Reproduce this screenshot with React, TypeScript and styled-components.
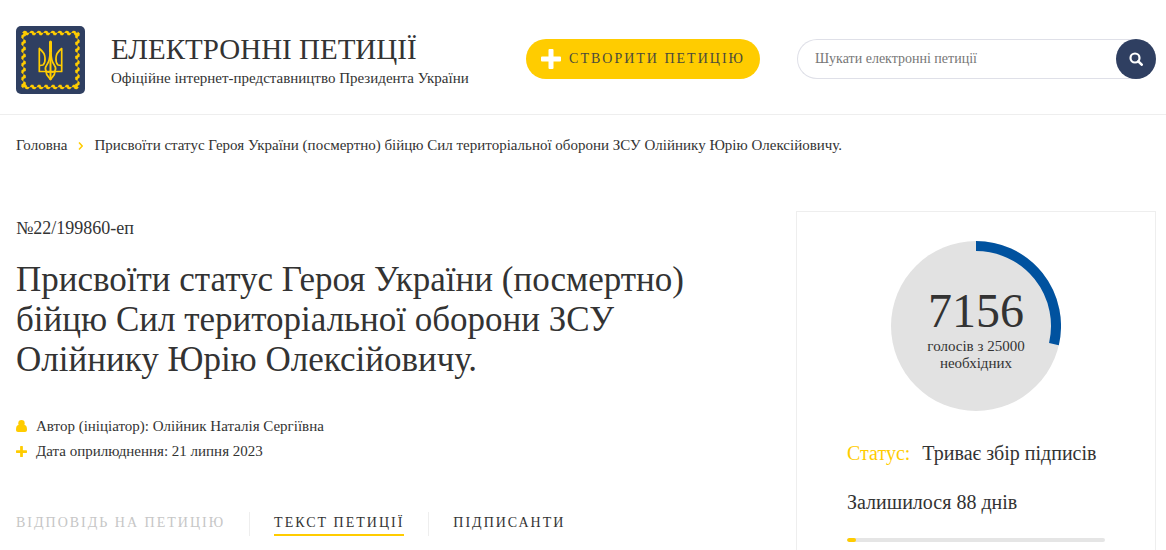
import React from "react";
import styled, { createGlobalStyle } from "styled-components";

const colors = {
  ink: "#333333",
  yellow: "#ffcc00",
  navy: "#2f3f61",
  blue: "#00529f",
  line: "#eeeeee",
  disc: "#e2e2e2",
};

const GlobalStyle = createGlobalStyle`
  *, *::before, *::after { box-sizing: border-box; }
  body {
    margin: 0;
    background: #ffffff;
    color: ${colors.ink};
    font-family: Georgia, "Liberation Serif", serif;
    font-size: 15px;
    line-height: 20px;
  }
  button, input { font: inherit; color: inherit; }
  a { color: inherit; text-decoration: none; }
  h1, h2, p, ol, ul { margin: 0; padding: 0; font-weight: 400; list-style: none; }
`;

const Page = styled.div`
  display: flex;
  flex-direction: column;
  min-height: 100vh;
`;

const Header = styled.header`
  display: flex;
  align-items: center;
  gap: 37px;
  padding: 26px 10px 20px 16px;
  border-bottom: 1px solid ${colors.line};
`;

const Brand = styled.a`
  display: flex;
  align-items: center;
  gap: 26px;
  flex: 1;
  min-width: 0;
`;

const EmblemSvg = styled.svg`
  width: 69px;
  height: 68px;
  flex: none;
`;

const BrandText = styled.span`
  padding-top: 2px;
`;

const BrandTitle = styled.span`
  display: block;
  font-size: 29px;
  line-height: 34px;
  white-space: nowrap;
`;

const BrandSubtitle = styled.span`
  display: block;
  line-height: 24px;
  white-space: nowrap;
`;

const CreateButton = styled.button`
  display: flex;
  align-items: center;
  justify-content: center;
  gap: 8px;
  width: 234px;
  height: 40px;
  margin-top: -2px;
  padding: 0;
  border: 0;
  border-radius: 20px;
  background: ${colors.yellow};
  color: #4b4a3c;
  font-size: 14px;
  letter-spacing: 2px;
  text-transform: uppercase;
  white-space: nowrap;
`;

const SearchForm = styled.form`
  display: flex;
  width: 359px;
  height: 40px;
  margin-top: -2px;
  border: 1px solid #dfe0e8;
  border-right: 0;
  border-radius: 20px;
`;

const SearchInput = styled.input`
  flex: 1;
  min-width: 0;
  padding: 0 17px;
  border: 0;
  background: transparent;
  outline: none;
  font-size: 14px;
  &::placeholder { color: #777777; opacity: 1; }
`;

const SearchButton = styled.button`
  display: flex;
  align-items: center;
  justify-content: center;
  width: 40px;
  height: 40px;
  margin: -1px 0;
  padding: 0;
  border: 0;
  border-radius: 50%;
  background: ${colors.navy};
`;

const Breadcrumbs = styled.ol`
  display: flex;
  align-items: center;
  gap: 11px;
  padding: 20px 10px 0 16px;
`;

const Main = styled.main`
  display: flex;
  flex: 1;
  gap: 37px;
  padding: 56px 10px 0 16px;
`;

const Petition = styled.article`
  flex: 1;
  min-width: 0;
`;

const PetitionNumber = styled.p`
  margin-top: 7px;
  font-size: 18px;
`;

const PetitionTitle = styled.h1`
  max-width: 700px;
  margin-top: 22px;
  font-size: 35px;
  line-height: 40px;
`;

const MetaList = styled.ul`
  display: flex;
  flex-direction: column;
  gap: 5px;
  margin-top: 36px;
`;

const MetaItem = styled.li`
  display: flex;
  align-items: center;
  gap: 9px;
`;

const Tabs = styled.nav`
  display: flex;
  margin-top: 51px;
`;

const TabCell = styled.div`
  display: flex;
  height: 24px;
  & + & {
    margin-left: 24px;
    padding-left: 24px;
    border-left: 1px solid ${colors.line};
  }
`;

const Tab = styled.button<{ $active?: boolean }>`
  padding: 0;
  border: 0;
  border-bottom: 2px solid ${(p) => (p.$active ? colors.yellow : "transparent")};
  background: transparent;
  font-size: 14px;
  letter-spacing: 2px;
  text-transform: uppercase;
  white-space: nowrap;
  &:disabled { color: #c6c6c6; }
`;

const VoteCard = styled.aside`
  width: 360px;
  flex: none;
  padding: 29px 50px 8px;
  border: 1px solid ${colors.line};
  border-bottom: 0;
`;

const VoteDial = styled.div`
  display: grid;
  place-items: center;
  width: 170px;
  height: 170px;
  margin: 0 auto;
  > * { grid-area: 1 / 1; }
`;

const VoteText = styled.div`
  padding-top: 4px;
  text-align: center;
  line-height: 17px;
`;

const VoteCount = styled.strong`
  display: block;
  font-size: 48px;
  font-weight: 400;
  line-height: 54px;
`;

const Status = styled.p<{ $gap: number }>`
  display: flex;
  gap: 12px;
  margin-top: ${(p) => p.$gap}px;
  font-size: 20px;
  line-height: 24px;
  white-space: nowrap;
`;

const StatusLabel = styled.span`
  color: ${colors.yellow};
`;

const TimeBar = styled.div`
  height: 4px;
  margin-top: 24px;
  border-radius: 2px;
  background: #e5e5e5;
  overflow: hidden;
`;

const TimeFill = styled.div`
  height: 100%;
  border-radius: 2px;
  background: ${colors.yellow};
`;

const twists = Array.from({ length: 8 }, (_, i) => i * 7);

function RopeSide() {
  return (
    <>
      {twists.map((x) => (
        <path key={x} d={`M${x} 2.200L${x + 2} .2L${x + 4.400} .6L${x + 5} 2L${x + 7.400} 2.600L${x + 6} 4.800L${x + 3.600} 4.800L${x + 2.800} 2.800Z`} />
      ))}
    </>
  );
}

function Emblem() {
  return (
    <EmblemSvg viewBox="0 0 69 68" aria-hidden="true">
      <rect width="69" height="68" rx="5" fill={colors.navy} />
      <g fill={colors.yellow}>
        {[0, 90, 180, 270].map((turn) => (
          <g key={turn} transform={`rotate(${turn} 34.500 34) translate(6 4.500)`}>
            <RopeSide />
          </g>
        ))}
      </g>
      <g fill="none" stroke={colors.yellow} strokeWidth="1.700" strokeLinejoin="round">
        <path d="M29 32C29 28 26.500 25 23.300 22.500V45.500H45.700V22.500C42.500 25 40 28 40 32" />
        <path d="M29 32C29.300 35 29 37 27 39L24 39.500M40 32C39.700 35 40 37 42 39L45 39.500" />
        <path d="M34.500 19V54" strokeWidth="2" />
        <path d="M34.500 16V26" strokeWidth="3" strokeLinecap="round" />
        <path d="M34 27C34 33 33 36 30.500 39.500C28 43 30 47.500 34.500 45.500M35 27C35 33 36 36 38.500 39.500C41 43 39 47.500 34.500 45.500" />
        <path d="M30 45.500C30 49.500 32.500 50.500 34.500 53.500C36.500 50.500 39 49.500 39 45.500" />
      </g>
    </EmblemSvg>
  );
}

function PlusIcon({ size }: { size: number }) {
  return (
    <svg width={size} height={size} viewBox="0 0 20 20" fill="currentColor" aria-hidden="true">
      <path d="M8.500 0h3a1 1 0 0 1 1 1v6.500H19a1 1 0 0 1 1 1v3a1 1 0 0 1-1 1h-6.500V19a1 1 0 0 1-1 1h-3a1 1 0 0 1-1-1v-6.500H1a1 1 0 0 1-1-1v-3a1 1 0 0 1 1-1h6.500V1a1 1 0 0 1 1-1z" />
    </svg>
  );
}

const MetaIcon = styled.span`
  display: flex;
  color: ${colors.yellow};
`;

const CreateIcon = styled.span`
  display: flex;
  color: #ffffff;
`;

function UserIcon() {
  return (
    <svg width="11" height="12" viewBox="0 0 11 12" fill="currentColor" aria-hidden="true">
      <circle cx="5.500" cy="3.200" r="3.200" />
      <path d="M2.400 5C.6 5.400 0 7.300 0 9.700C0 11 .8 12 2 12H9C10.200 12 11 11 11 9.700C11 7.300 10.400 5.400 8.600 5Z" />
    </svg>
  );
}

function SearchIcon() {
  return (
    <svg width="14" height="14" viewBox="0 0 14 14" fill="none" stroke="#ffffff" aria-hidden="true">
      <circle cx="6" cy="6" r="4.500" strokeWidth="2.200" />
      <path d="M9.300 9.300L12.700 12.700" strokeWidth="2.600" strokeLinecap="round" />
    </svg>
  );
}

function Dial({ votes, goal }: { votes: number; goal: number }) {
  const angle = (votes / goal) * 2 * Math.PI;
  const x = 85 + 80 * Math.sin(angle);
  const y = 85 - 80 * Math.cos(angle);
  return (
    <svg width="170" height="170" viewBox="0 0 170 170" aria-hidden="true">
      <circle cx="85" cy="85" r="85" fill={colors.disc} />
      <path d={`M85 5A80 80 0 0 1 ${x} ${y}`} fill="none" stroke={colors.blue} strokeWidth="10" />
    </svg>
  );
}

export default function App() {
  const title =
    "Присвоїти статус Героя України (посмертно) бійцю Сил територіальної оборони ЗСУ Олійнику Юрію Олексійовичу.";
  return (
    <Page>
      <GlobalStyle />
      <Header>
        <Brand href="#">
          <Emblem />
          <BrandText>
            <BrandTitle>ЕЛЕКТРОННІ ПЕТИЦІЇ</BrandTitle>
            <BrandSubtitle>Офіційне інтернет-представництво Президента України</BrandSubtitle>
          </BrandText>
        </Brand>
        <CreateButton type="button">
          <CreateIcon><PlusIcon size={20} /></CreateIcon>
          Створити петицію
        </CreateButton>
        <SearchForm role="search" onSubmit={(e) => e.preventDefault()}>
          <SearchInput type="text" aria-label="Шукати електронні петиції" placeholder="Шукати електронні петиції" />
          <SearchButton type="submit" aria-label="Шукати"><SearchIcon /></SearchButton>
        </SearchForm>
      </Header>
      <Breadcrumbs>
        <li><a href="#">Головна</a></li>
        <li aria-hidden="true">
          <svg width="5" height="8" viewBox="0 0 5 8" fill="none" stroke={colors.yellow} strokeWidth="1.500">
            <path d="M1 .5L4.200 4L1 7.500" />
          </svg>
        </li>
        <li>{title}</li>
      </Breadcrumbs>
      <Main>
        <Petition>
          <PetitionNumber>№22/199860-еп</PetitionNumber>
          <PetitionTitle>{title}</PetitionTitle>
          <MetaList>
            <MetaItem>
              <MetaIcon><UserIcon /></MetaIcon>
              Автор (ініціатор): Олійник Наталія Сергіївна
            </MetaItem>
            <MetaItem>
              <MetaIcon><PlusIcon size={11} /></MetaIcon>
              Дата оприлюднення: 21 липня 2023
            </MetaItem>
          </MetaList>
          <Tabs>
            <TabCell><Tab type="button" disabled>Відповідь на петицію</Tab></TabCell>
            <TabCell><Tab type="button" $active>Текст петиції</Tab></TabCell>
            <TabCell><Tab type="button">Підписанти</Tab></TabCell>
          </Tabs>
        </Petition>
        <VoteCard>
          <VoteDial>
            <Dial votes={7156} goal={25000} />
            <VoteText>
              <VoteCount>7156</VoteCount>
              голосів з 25000
              <br />
              необхідних
            </VoteText>
          </VoteDial>
          <Status $gap={30}>
            <StatusLabel>Статус:</StatusLabel>
            <span>Триває збір підписів</span>
          </Status>
          <Status $gap={25}>Залишилося 88 днів</Status>
          <TimeBar><TimeFill style={{ width: `${(3 / 91) * 100}%` }} /></TimeBar>
        </VoteCard>
      </Main>
    </Page>
  );
}
